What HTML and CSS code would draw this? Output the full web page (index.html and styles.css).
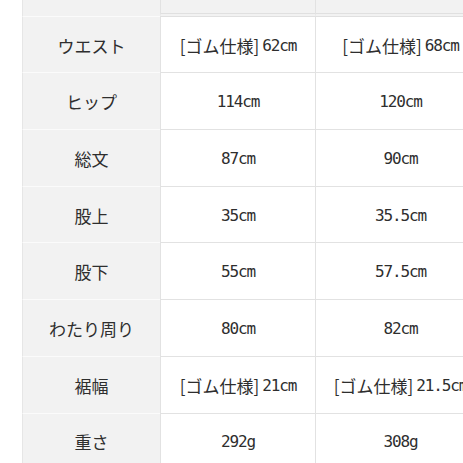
FILE: index.html
```html
<!DOCTYPE html>
<html lang="ja">
<head>
<meta charset="utf-8">
<link rel="stylesheet" href="styles.css">
</head>
<body>
<div class="table">
  <div class="cell label head"></div>
  <div class="cell val head">M</div>
  <div class="cell val head">L</div>

  <div class="cell label">ウエスト</div>
  <div class="cell val"><span class="jp">[ゴム仕様]</span>62cm</div>
  <div class="cell val"><span class="jp">[ゴム仕様]</span>68cm</div>

  <div class="cell label">ヒップ</div>
  <div class="cell val">114cm</div>
  <div class="cell val">120cm</div>

  <div class="cell label">総文</div>
  <div class="cell val">87cm</div>
  <div class="cell val">90cm</div>

  <div class="cell label">股上</div>
  <div class="cell val">35cm</div>
  <div class="cell val">35.5cm</div>

  <div class="cell label">股下</div>
  <div class="cell val">55cm</div>
  <div class="cell val">57.5cm</div>

  <div class="cell label">わたり周り</div>
  <div class="cell val">80cm</div>
  <div class="cell val">82cm</div>

  <div class="cell label">裾幅</div>
  <div class="cell val"><span class="jp">[ゴム仕様]</span>21cm</div>
  <div class="cell val"><span class="jp">[ゴム仕様]</span>21.5cm</div>

  <div class="cell label">重さ</div>
  <div class="cell val">292g</div>
  <div class="cell val">308g</div>
</div>
</body>
</html>
```
FILE: styles.css
```css
html, body {
  margin: 0;
  padding: 0;
  background: #fff;
  overflow: hidden;
  width: 463px;
  height: 463px;
}

.table {
  display: grid;
  grid-template-columns: 138px 155px 170px;
  grid-auto-rows: 56.7px;
  margin-left: 22px;
  margin-top: -40px;
  width: 463px;
}

.cell {
  box-sizing: border-box;
  display: flex;
  align-items: center;
  justify-content: center;
  color: #2e2e2e;
  white-space: nowrap;
}

.label {
  background: #f2f2f2;
  border-left: 1px solid #e6e6e6;
  border-bottom: 1px solid #fbfbfb;
  font-family: "Noto Sans CJK JP", sans-serif;
  font-size: 17px;
  padding-top: 1px;
}

.val {
  background: #fff;
  border-left: 1px solid #e2e2e2;
  border-bottom: 1px solid #e2e2e2;
  font-family: "DejaVu Sans Mono", "Noto Sans CJK JP", monospace;
  font-size: 16px;
  letter-spacing: -1.1px;
  padding-top: 1px;
}

.head {
  background: #f2f2f2;
  align-items: flex-end;
  padding-bottom: 9px;
}

.val.head {
  border-bottom: 4px double #e0e0e0;
}

.jp {
  font-family: "Noto Sans CJK JP", sans-serif;
  font-size: 17px;
  letter-spacing: 0;
  margin-right: 3px;
}
```
